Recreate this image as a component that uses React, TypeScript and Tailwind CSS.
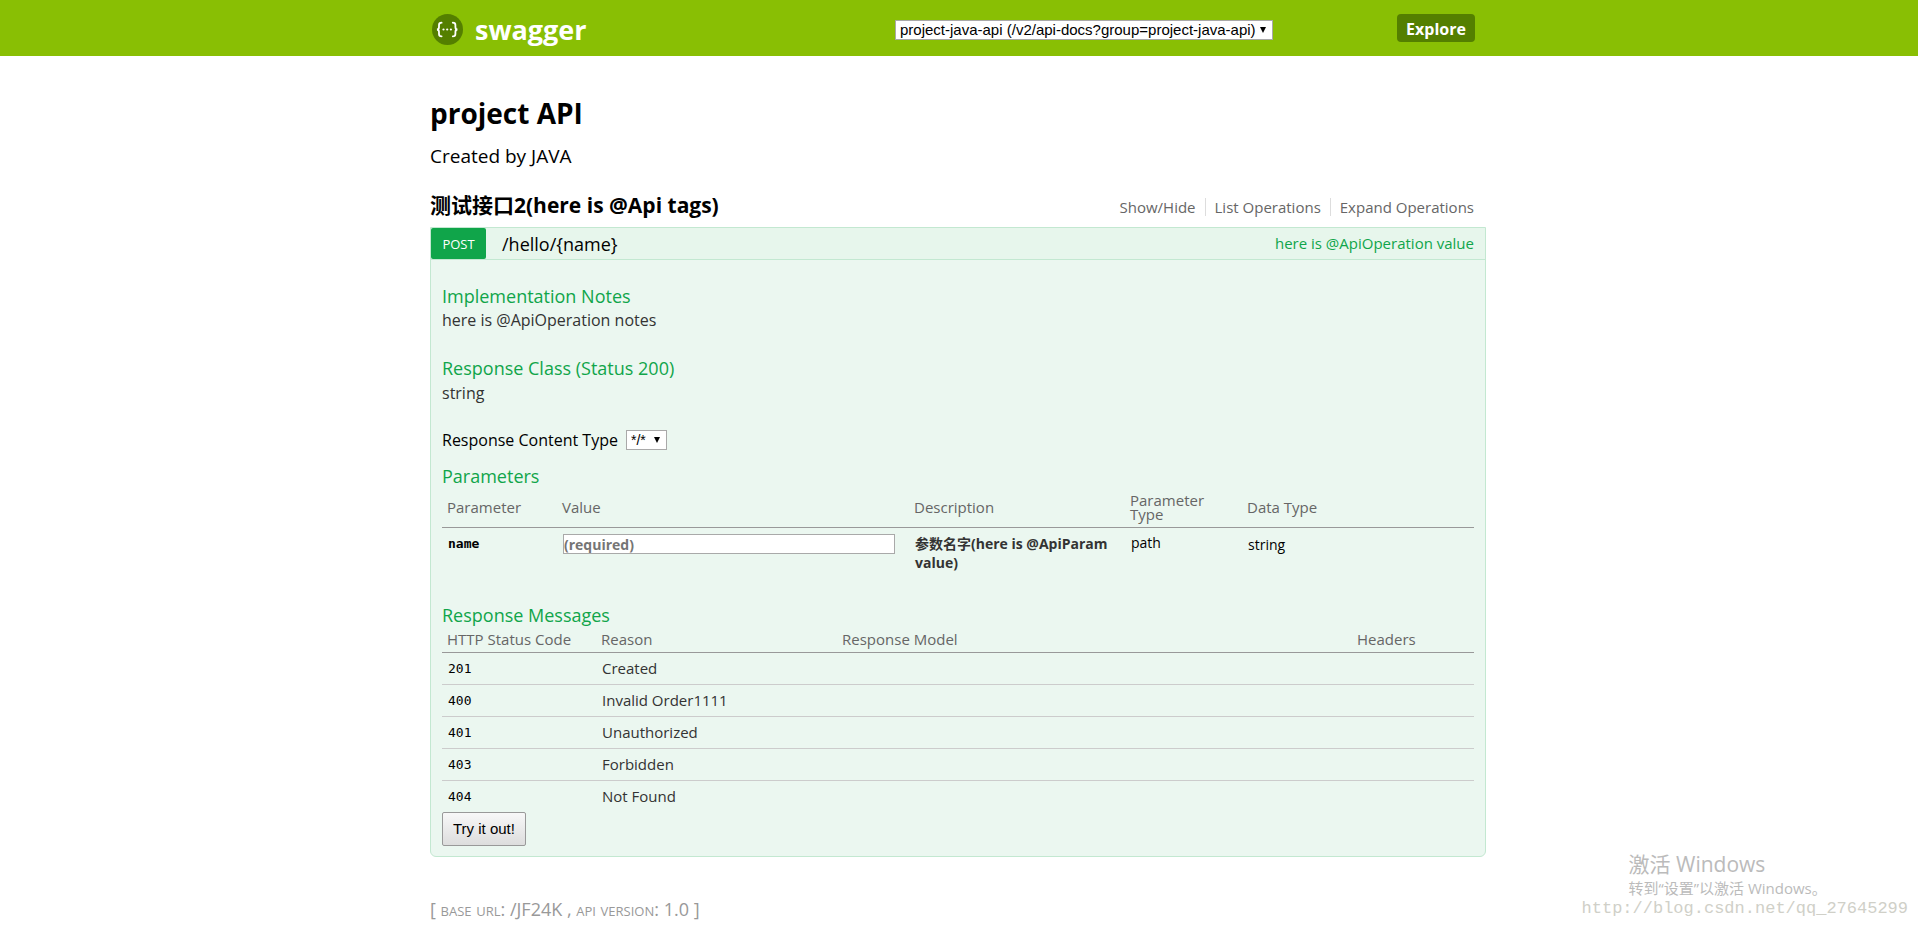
import { useState } from "react";
import type { ReactNode, SelectHTMLAttributes } from "react";

const RESPONSES = [
    { code: "201", reason: "Created" },
    { code: "400", reason: "Invalid Order1111" },
    { code: "401", reason: "Unauthorized" },
    { code: "403", reason: "Forbidden" },
    { code: "404", reason: "Not Found" },
];

function Logo() {
    return (
        <svg viewBox="0 0 32 32" className="h-8 w-8" aria-hidden="true">
            <circle cx="16.5" cy="15.5" r="15.5" fill="#547f00" />
            <g fill="none" stroke="#fff" strokeWidth="1.8" strokeLinecap="round">
                <path d="M10.600 8.700c-2 0-2.600.8-2.600 2.400v1.900c0 1.500-.5 2.400-2 2.500 1.500.1 2 1 2 2.500v1.900c0 1.600.6 2.400 2.600 2.400" />
                <path d="M21.800 8.700c2 0 2.600.8 2.600 2.400v1.900c0 1.500.5 2.400 2 2.500-1.500.1-2 1-2 2.500v1.900c0 1.600-.6 2.400-2.600 2.400" />
            </g>
            <g fill="#fff">
                <circle cx="12.5" cy="15.500" r="1.100" />
                <circle cx="16.200" cy="15.500" r="1.100" />
                <circle cx="19.900" cy="15.500" r="1.100" />
            </g>
        </svg>
    );
}

// Native select with a small solid arrow
function Select({ children, className, ...props }: SelectHTMLAttributes<HTMLSelectElement> & { children: ReactNode }) {
    return (
        <span className="relative inline-flex">
            <select
                {...props}
                className={`h-5 appearance-none border border-[#a9a9a9] bg-white pl-1 pr-4 font-['Liberation_Sans',Arial,sans-serif] leading-[18px] text-black ${className}`}
            >
                {children}
            </select>
            <svg viewBox="0 0 6 6" className="pointer-events-none absolute right-[7px] top-[7px] h-1.5 w-1.5" aria-hidden="true">
                <path d="M0 0h6L3 6z" fill="#000" />
            </svg>
        </span>
    );
}

function SectionTitle({ children }: { children: ReactNode }) {
    return <h4 className="text-lg leading-[22px] text-[#10a54a]">{children}</h4>;
}

export default function App() {
    const [name, setName] = useState("");

    return (
        <div className="relative min-h-screen bg-white font-['Open_Sans','Noto_Sans_CJK_SC',sans-serif] text-black">
            <header className="bg-[#89bf04]">
                <div className="mx-auto flex h-14 max-w-[1058px] items-center pr-0.5">
                    <a href="#" className="flex flex-1 items-center gap-3 pl-px pt-[3px] text-[27px] font-bold leading-8 text-white">
                        <Logo />
                        swagger
                    </a>
                    <form className="flex items-start justify-between gap-[124px] pr-[11px]" onSubmit={(e) => e.preventDefault()}>
                        <div className="flex pt-1.5">
                            <Select aria-label="API group" className="text-[15px]">
                                <option>project-java-api (/v2/api-docs?group=project-java-api)</option>
                            </Select>
                        </div>
                        <button type="submit" className="h-7 w-[78px] rounded bg-[#547f00] pt-px text-base font-bold leading-7 text-white">
                            Explore
                        </button>
                    </form>
                </div>
            </header>

            <main className="mx-auto max-w-[1058px] pr-0.5 pt-[39px]">
                <h1 className="text-[28px] font-bold leading-9">project API</h1>
                <p className="mt-[13px] text-[19px] leading-6">Created by JAVA</p>

                <div className="mt-[25px] flex items-center justify-between pb-2.5">
                    <h2 className="text-[21px] font-bold leading-6">测试接口2(here is @Api tags)</h2>
                    <ul className="flex pr-3 pt-1 text-[15px] leading-[18px] text-[#666]">
                        <li className="border-r border-[#ddd] pr-[9px]"><a href="#">Show/Hide</a></li>
                        <li className="border-r border-[#ddd] px-[9px]"><a href="#">List Operations</a></li>
                        <li className="pl-[9px]"><a href="#">Expand Operations</a></li>
                    </ul>
                </div>

                <section className="rounded-b-md border border-[#c3e8d1] bg-[#ebf7f0]">
                    <div className="flex items-center border-b border-[#c3e8d1] bg-[#e7f6ec] pr-[11px]">
                        <a href="#" className="w-[55px] rounded-xs bg-[#10a54a] pt-px text-center text-[13px] leading-[30px] text-white">
                            POST
                        </a>
                        <a href="#" className="flex-1 pl-4 text-lg leading-6">/hello/{"{name}"}</a>
                        <a href="#" className="text-[15px] text-[#10a54a]">here is @ApiOperation value</a>
                    </div>

                    <div className="px-[11px] pb-2.5 pt-[25px]">
                        <SectionTitle>Implementation Notes</SectionTitle>
                        <p className="mt-0.5 text-base leading-[22px] text-[#333]">here is @ApiOperation notes</p>

                        <div className="mt-[26px]">
                            <SectionTitle>Response Class (Status 200)</SectionTitle>
                            <p className="mt-[3px] text-base leading-[22px] text-[#333]">string</p>
                        </div>

                        <div className="mb-[15px] mt-[26px] flex items-center gap-2">
                            <label htmlFor="content-type" className="text-base leading-5">Response Content Type</label>
                            <Select id="content-type" className="w-[41px] text-sm">
                                <option>*/*</option>
                            </Select>
                        </div>

                        <SectionTitle>Parameters</SectionTitle>
                        <table className="w-full table-fixed text-left text-sm">
                            <thead>
                                <tr className="border-b border-[#999] text-[15px] leading-[14px] text-[#666]">
                                    <th className="w-[115px] px-[5px] py-1.5 font-normal">Parameter</th>
                                    <th className="w-[352px] px-[5px] font-normal">Value</th>
                                    <th className="w-[216px] px-[5px] font-normal">Description</th>
                                    <th className="w-[117px] py-1.5 pl-[5px] pr-6 font-normal">Parameter Type</th>
                                    <th className="px-[5px] font-normal">Data Type</th>
                                </tr>
                            </thead>
                            <tbody>
                                <tr className="align-top leading-[19px]">
                                    <td className="px-1.5 pt-1.5 font-['DejaVu_Sans_Mono',monospace] text-[13px] font-bold">
                                        <label htmlFor="param-name">name</label>
                                    </td>
                                    <td className="px-1.5 pt-1.5">
                                        <input
                                            id="param-name"
                                            type="text"
                                            placeholder="(required)"
                                            value={name}
                                            onChange={(e) => setName(e.target.value)}
                                            className="block h-5 w-[332px] border border-[#a9a9a9] bg-white font-bold placeholder:text-[#757575]"
                                        />
                                    </td>
                                    <td className="pl-1.5 pt-1.5 font-bold text-[#333]">参数名字(here is @ApiParam value)</td>
                                    <td className="px-1.5 pt-[5px]">path</td>
                                    <td className="px-1.5 pt-[7px]">string</td>
                                </tr>
                            </tbody>
                        </table>

                        <div className="mt-8">
                            <SectionTitle>Response Messages</SectionTitle>
                        </div>
                        <table className="w-full table-fixed text-left text-sm">
                            <thead>
                                <tr className="border-b border-[#999] text-[15px] leading-[14px] text-[#666]">
                                    <th className="w-[154px] px-[5px] py-1.5 font-normal">HTTP Status Code</th>
                                    <th className="w-[241px] px-[5px] font-normal">Reason</th>
                                    <th className="w-[515px] px-[5px] font-normal">Response Model</th>
                                    <th className="px-[5px] font-normal">Headers</th>
                                </tr>
                            </thead>
                            <tbody>
                                {RESPONSES.map((res) => (
                                    <tr key={res.code} className="border-b border-[#ccc] last:border-b-0">
                                        <td className="px-1.5 font-['DejaVu_Sans_Mono',monospace] text-[13px] leading-[31px]">{res.code}</td>
                                        <td className="px-1.5 text-[15px] leading-[31px] text-[#333]">{res.reason}</td>
                                        <td></td>
                                        <td></td>
                                    </tr>
                                ))}
                            </tbody>
                        </table>

                        <button
                            type="button"
                            className="block h-[34px] rounded-xs border border-[#999] bg-linear-to-b from-[#f8f8f8] to-[#ddd] px-2.5 font-['Liberation_Sans',Arial,sans-serif] text-[15px]"
                        >
                            Try it out!
                        </button>
                    </div>
                </section>

                <footer className="mt-10 pb-1 text-lg leading-6 text-[#999]">
                    [ <span className="[font-variant:small-caps]">base url</span>: /JF24K , <span className="[font-variant:small-caps]">api version</span>: 1.0 ]
                </footer>
            </main>

            {/* overlays in the corner of the window */}
            <div className="pointer-events-none absolute bottom-3 right-2.5 flex flex-col text-[#bbb]">
                <p className="pl-[47px] text-[21px] leading-[26px]">激活 Windows</p>
                <p className="pb-0.5 pl-[47px] text-[15px] leading-[22px]">转到“设置”以激活 Windows。</p>
                <p className="font-['Liberation_Mono',monospace] text-[17px] leading-4 text-[#d0d0c8]">http://blog.csdn.net/qq_27645299</p>
            </div>
        </div>
    );
}
